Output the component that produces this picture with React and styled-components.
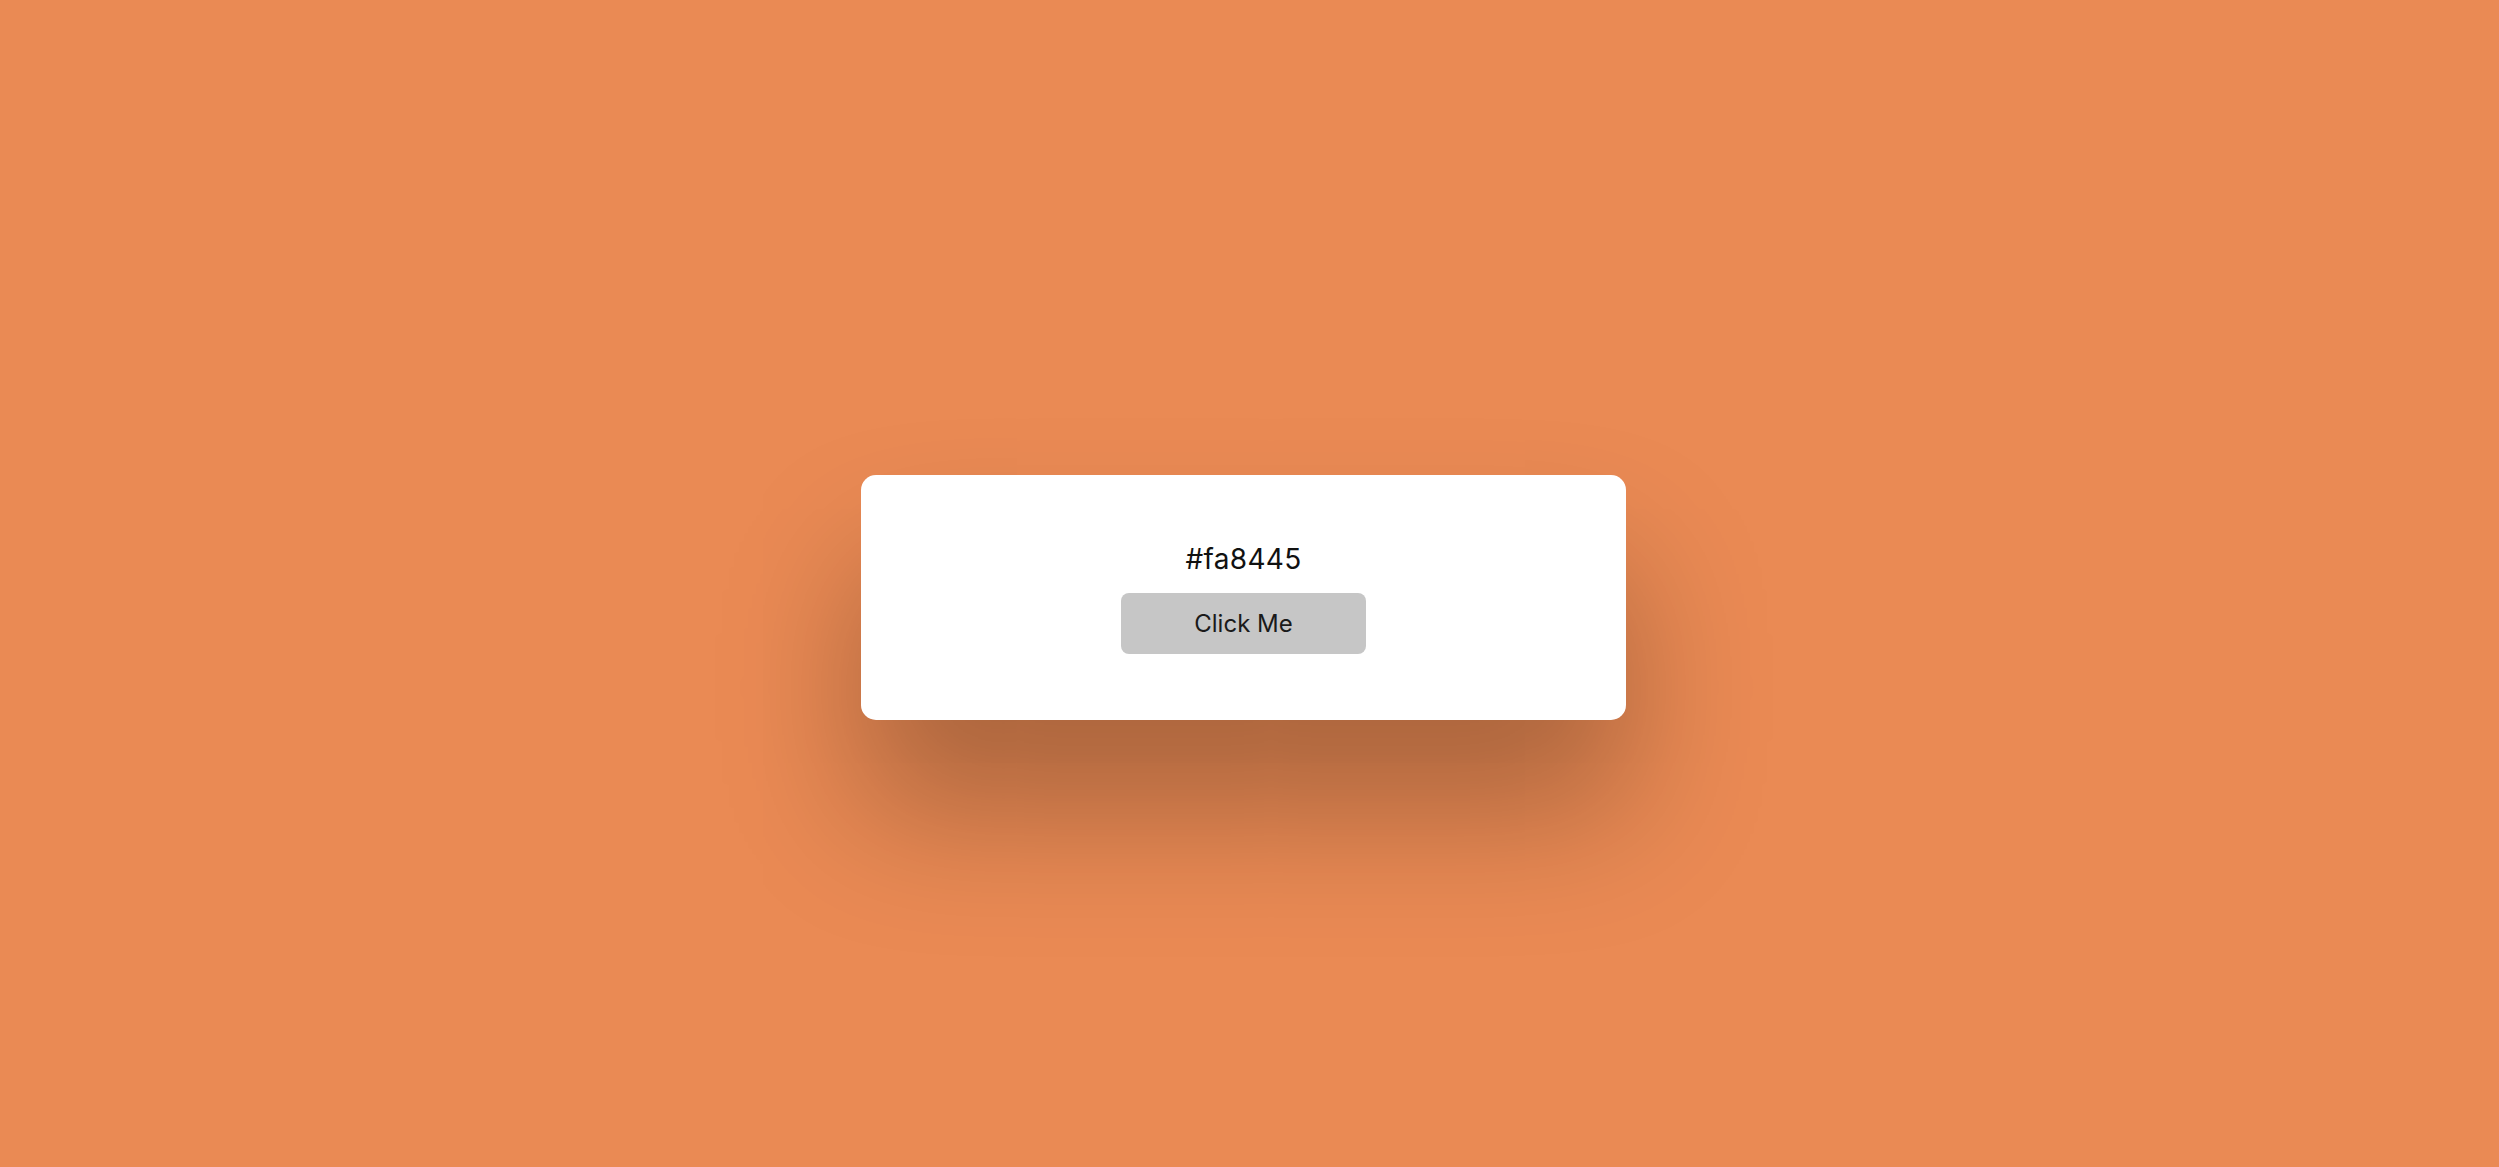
import React, { useState } from "react";
import styled, { createGlobalStyle } from "styled-components";

const GlobalStyle = createGlobalStyle`
  html, body {
    margin: 0;
    padding: 0;
  }
  body {
    background: #ea8a54;
    font-family: "Inter", "Open Sans", sans-serif;
  }
`;

const Page = styled.div`
  display: flex;
  align-items: center;
  justify-content: center;
  min-height: 100vh;
  box-sizing: border-box;
  padding: 28px 12px 0 0;
  background: #ea8a54;
`;

const Card = styled.div`
  display: flex;
  flex-direction: column;
  align-items: center;
  justify-content: center;
  gap: 16px;
  width: 765px;
  height: 245px;
  background: #ffffff;
  border-radius: 15px;
  box-shadow: 0 90px 140px rgba(0, 0, 0, 0.28);
`;

const ColorCode = styled.div`
  font-size: 28px;
  color: #111111;
  line-height: 36px;
  letter-spacing: 0.3px;
`;

const Button = styled.button`
  width: 245px;
  height: 61px;
  border: 0;
  outline: none;
  border-radius: 8px;
  background: #c6c6c6;
  color: #1a1a1a;
  font-family: "Inter", "Open Sans", sans-serif;
  font-size: 24px;
  cursor: pointer;
`;

const colors = ["#fa8445", "#45b3fa", "#7dd87a", "#c77dff"];

export default function App() {
  const [index, setIndex] = useState(0);

  return (
    <Page>
      <GlobalStyle />
      <Card>
        <ColorCode>{colors[index]}</ColorCode>
        <Button onClick={() => setIndex((index + 1) % colors.length)}>
          Click Me
        </Button>
      </Card>
    </Page>
  );
}
